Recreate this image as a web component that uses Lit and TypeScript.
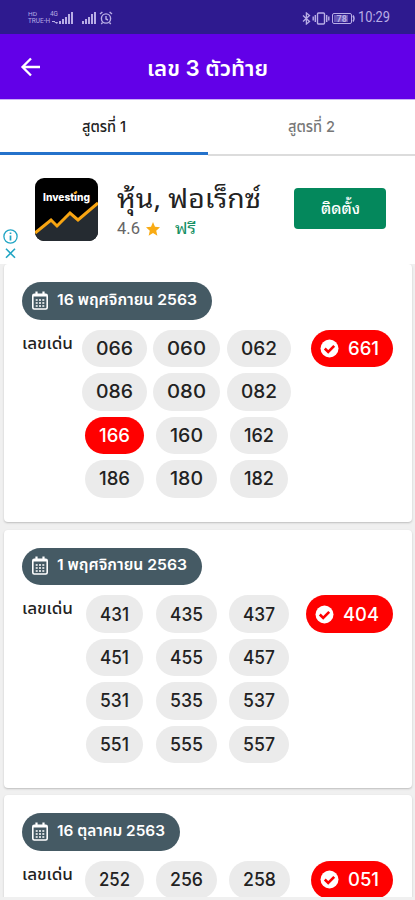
import { LitElement, html, svg, css } from "lit";
import { customElement, property } from "lit/decorators.js";

/** One line of text, set to an exact advance width. */
@customElement("fit-text")
class FitText extends LitElement {
  @property() text = "";
  @property({ type: Number }) w = 40;
  @property({ type: Number }) size = 16;
  @property({ type: Number }) h = 24;
  static styles = css`
    :host { display: block; flex: none; }
    svg { display: block; overflow: visible; }
    text { fill: currentColor; }
  `;
  render() {
    return html`<svg width=${this.w} height=${this.h}>
      ${svg`<text x="0" y=${this.h * 0.75} font-size=${this.size} textLength=${this.w} lengthAdjust="spacingAndGlyphs">${this.text}</text>`}
    </svg>`;
  }
}

type Num = [value: string, width: number];
interface Draw {
  date: string;
  dateWidth: number;
  result: string;
  resultWidth: number;
  rows: Num[][];
}

const draws: Draw[] = [
  {
    date: "16 พฤศจิกายน 2563", dateWidth: 140, result: "661", resultWidth: 31,
    rows: [
      [["066", 65], ["060", 67], ["062", 64]],
      [["086", 65], ["080", 67], ["082", 64]],
      [["166", 59], ["160", 61], ["162", 58]],
      [["186", 59], ["180", 61], ["182", 58]],
    ],
  },
  {
    date: "1 พฤศจิกายน 2563", dateWidth: 130, result: "404", resultWidth: 36,
    rows: [
      [["431", 57], ["435", 61], ["437", 60]],
      [["451", 57], ["455", 61], ["457", 60]],
      [["531", 57], ["535", 61], ["537", 60]],
      [["551", 57], ["555", 61], ["557", 60]],
    ],
  },
  {
    date: "16 ตุลาคม 2563", dateWidth: 108, result: "051", resultWidth: 31,
    rows: [[["252", 59], ["256", 61], ["258", 61]]],
  },
];

@customElement("app-root")
class AppRoot extends LitElement {
  static styles = css`
    :host {
      display: flex; flex-direction: column; height: 900px; overflow: hidden;
      font-family: Inter, "Noto Sans Thai", sans-serif; color: #222; background: #fff;
    }
    svg { display: block; flex: none; }
    .status {
      height: 34px; flex: none; background: #2e1a8f; color: #b9aee6;
      display: flex; align-items: center; padding: 2px 25px 0 28px; box-sizing: border-box;
      font-family: Roboto, sans-serif;
    }
    .grow { flex: 1; }
    .header {
      height: 66px; flex: none; background: #6200e8; color: #fff; border-bottom: 1px solid #cbb0f5; box-sizing: border-box;
      display: grid; grid-template-columns: 147px 1fr; align-items: center; font-weight: 600;
    }
    .back { padding-left: 20px; }
    .tabs { height: 56px; flex: none; display: grid; grid-template-columns: 208px 207px; font-weight: 500; }
    .tab { display: flex; justify-content: center; padding-top: 15px; color: #777; border-bottom: 2px solid #dcdcdc; }
    .tab.on { color: #222; border-bottom: 3px solid #2472cb; margin-bottom: 1px; }
    .ad { height: 108px; padding-top: 1px; box-sizing: border-box; flex: none; display: flex; align-items: flex-start; }
    .marks { width: 35px; padding: 72px 0 0 3px; box-sizing: border-box; display: grid; gap: 3px; }
    .logo { margin: 21px 19px 0 0; }
    .copy { padding-top: 23px; width: 177px; }
    .title { color: #222; font-weight: 400; font-family: "Noto Sans Thai Looped", Loma, Waree, Garuda, Norasi, "Noto Serif Thai", "Open Sans", sans-serif; }
    .meta { display: flex; align-items: center; color: #666; margin-top: 2px; font-family: Roboto, "Noto Sans Thai Looped", Loma, Waree, Garuda, sans-serif; }
    .star { margin: 0 15px 0 6px; }
    .free { color: #159064; }
    .install {
      margin-top: 31px; width: 92px; height: 41px; border-radius: 4px; background: #04885c; color: #fff;
      display: flex; align-items: center; justify-content: center; font-weight: 500;
      font-family: "Noto Sans Thai Looped", Loma, Waree, Garuda, Roboto, sans-serif;
    }
    .list { height: 633px; flex: none; overflow: hidden; background: #f0f0f0; padding: 0 3px 0 4px; box-sizing: border-box; }
    .foot { height: 3px; flex: none; background: #f0f0f0; }
    .card {
      height: 258px; box-sizing: border-box; background: #fff; border-radius: 4px; padding: 18px 19px 0 18px;
      margin-bottom: 7.6px; box-shadow: 0 1px 2px #bdbdbd;
    }
    .date {
      display: flex; width: max-content; align-items: center; height: 37.5px; border-radius: 19px; background: #455a64; color: #fff;
      padding: 0 15px 0 10px; gap: 9px; box-sizing: border-box; font-weight: 600;
    }
    .date fit-text { margin-bottom: 2px; }
    .date svg { margin-bottom: 1px; }
    .body { display: flex; align-items: flex-start; margin-top: 10.3px; }
    .label { width: 56px; font-weight: 500; padding-top: 1px; }
    .nums { display: grid; grid-template-columns: repeat(3, 72.5px); row-gap: 5.8px; justify-items: center; }
    .num {
      height: 37.6px; border-radius: 19px; background: #ebebeb; display: flex; align-items: center;
      justify-content: center; font-weight: 500;
    }
    .hit { background: #f00; color: #fff; }
    .num fit-text, .result fit-text { margin-bottom: 1px; }
    .result {
      margin-left: auto; height: 37.6px; border-radius: 19px; background: #f00; color: #fff; display: flex;
      align-items: center; gap: 9px; padding: 0 14px 0 9px; font-weight: 500;
    }
  `;

  private signal() {
    return html`<svg width="14" height="12" viewBox="0 0 14 12" fill="currentColor">
      <path d="M0 9h2v3H0zM3 7h2v5H3zM6 5h2v7H6zM9 2h2v10H9zM12 0h2v12h-2z"/></svg>`;
  }

  private statusBar() {
    return html`<div class="status">
      <div>
        <fit-text text="HD" w="9" h="6" size="6"></fit-text>
        <fit-text text="TRUE-H" w="22" h="8" size="7.5"></fit-text>
      </div>
      <div>
        <fit-text text="4G" w="8" h="6" size="6.5"></fit-text>
        <svg width="9" height="8" viewBox="0 -3 9 8" fill="currentColor"><path d="M2 1h3v1h3l-1 2-3-2H2z"/></svg>
      </div>
      ${this.signal()}
      <svg width="9" height="12"></svg>
      ${this.signal()}
      <svg width="17" height="14" viewBox="-3 0 17 14" fill="none" stroke="currentColor" stroke-width="1.4">
        <circle cx="7" cy="7.5" r="4.6"/><path d="M7 5v3l2 1M1 3l2.4-2M13 3l-2.4-2M3.6 11.5 2.2 13M10.4 11.5l1.4 1.5"/></svg>
      <span class="grow"></span>
      <svg width="9" height="13" viewBox="0 0 9 13" fill="none" stroke="currentColor" stroke-width="1.3">
        <path d="M1 3.5l6.5 6L4.4 12V1l3.1 2.5-6.5 6"/></svg>
      <svg width="20" height="13" viewBox="-2 0 20 13" fill="none" stroke="currentColor" stroke-width="1.4">
        <rect x="4.5" y="1" width="7" height="11" rx="1"/><path d="M2.3 3v7M.2 4.5v4M13.7 3v7M15.8 4.5v4"/></svg>
      <svg width="27" height="11" viewBox="-1 0 27 11" fill="none" stroke="currentColor">
        <rect x=".5" y=".5" width="19" height="10" rx="1.5"/><path d="M21 2.5q2 3 0 6" stroke-width="1.5"/>
        <rect x="2" y="2" width="14" height="7" fill="currentColor" fill-opacity=".4" stroke="none"/>
        <text x="4.5" y="9" font-size="9" font-weight="700" fill="currentColor" stroke="none">78</text></svg>
      <fit-text text="10:29" w="32" h="16" size="14"></fit-text>
    </div>`;
  }

  private ad() {
    return html`<div class="ad">
      <div class="marks">
        <svg width="15" height="15" viewBox="0 0 15 15" fill="none" stroke="#21a5c4" stroke-width="1.3">
          <circle cx="7.5" cy="7.5" r="6.6"/><path d="M7.5 6.4v5M7.5 3.4v1.7" stroke-width="1.7"/></svg>
        <svg width="15" height="13" viewBox="0 0 15 13" fill="none" stroke="#21a5c4" stroke-width="1.6">
          <path d="M3 1.8l9 9M12 1.8l-9 9"/></svg>
      </div>
      <svg class="logo" width="63" height="63" viewBox="0 0 63 63">
        <clipPath id="tile"><rect width="63" height="63" rx="9"/></clipPath>
        <g clip-path="url(#tile)">
          <rect width="63" height="63"/>
          <path d="M0 55 16 42l6 6 13-13 8 7 20-17v38H0z" fill="#252b31"/>
          <path d="M0 55 16 42l6 6 13-13 8 7 20-17" fill="none" stroke="#f8a512" stroke-width="3"/>
        </g>
        <text x="8" y="23" font-size="11" font-weight="800" fill="#fff" textLength="47" lengthAdjust="spacingAndGlyphs">Investing</text>
        <path d="M39 15.5l3-2" stroke="#f8a512" stroke-width="2"/>
      </svg>
      <div class="copy">
        <fit-text class="title" text="หุ้น, ฟอเร็กซ์" w="144" h="37" size="27"></fit-text>
        <div class="meta">
          <fit-text text="4.6" w="23" h="20" size="17"></fit-text>
          <svg class="star" width="14" height="14" viewBox="0 0 24 24" fill="#f9ab14"><path d="m12 0 3.4 8.2 8.6.8-6.5 5.8 2 8.7L12 18.9l-7.5 4.6 2-8.7L0 9l8.6-.8z"/></svg>
          <fit-text class="free" text="ฟรี" w="21" h="20" size="16"></fit-text>
        </div>
      </div>
      <div class="install"><fit-text text="ติดตั้ง" w="39" h="20" size="15.5"></fit-text></div>
    </div>`;
  }

  private card(d: Draw) {
    return html`<section class="card">
      <div class="date">
        <svg width="16" height="19" viewBox="0 0 16 19" fill="none" stroke="#fff" stroke-width="1.6">
          <rect x=".8" y="3.2" width="14.4" height="14.8" rx="1.5"/>
          <path d="M4.5 .5v3M11.5 .5v3M1 4.5h14" stroke-width="2.2"/>
          <path d="M3.7 9h2M7 9h2M10.3 9h2M3.7 12h2M7 12h2M10.3 12h2M3.7 15h2M7 15h2M10.3 15h2" stroke-width="1.7"/></svg>
        <fit-text text=${d.date} w=${d.dateWidth} h="20" size="15"></fit-text>
      </div>
      <div class="body">
        <fit-text class="label" text="เลขเด่น" w="51" h="24" size="15"></fit-text>
        <div class="nums">
          ${d.rows.flat().map(([value, width]) => html`
            <div class="num ${value === "166" ? "hit" : ""}" style="width:${width}px">
              <fit-text text=${value} w=${width - 28} h="26" size="18.5"></fit-text>
            </div>`)}
        </div>
        <div class="result">
          <svg width="19" height="19" viewBox="0 0 19 19"><circle cx="9.5" cy="9.5" r="9" fill="#fff"/>
            <path d="m4.8 9.5 3.4 3.5 6-6.2" fill="none" stroke="#f00" stroke-width="2.6"/></svg>
          <fit-text text=${d.result} w=${d.resultWidth} h="26" size="18.5"></fit-text>
        </div>
      </div>
    </section>`;
  }

  render() {
    return html`
      ${this.statusBar()}
      <div class="header">
        <svg class="back" width="20" height="20" viewBox="0 0 20 20" fill="none" stroke="#fff" stroke-width="2.3">
          <path d="M20 10H3M11 1.5 2.5 10l8.5 8.5"/></svg>
        <fit-text text="เลข 3 ตัวท้าย" w="121" h="34" size="22"></fit-text>
      </div>
      <div class="tabs">
        <div class="tab on"><fit-text text="สูตรที่ 1" w="44" h="22" size="15"></fit-text></div>
        <div class="tab"><fit-text text="สูตรที่ 2" w="47" h="22" size="15"></fit-text></div>
      </div>
      ${this.ad()}
      <div class="list">${draws.map((d) => this.card(d))}</div>
      <div class="foot"></div>`;
  }
}
